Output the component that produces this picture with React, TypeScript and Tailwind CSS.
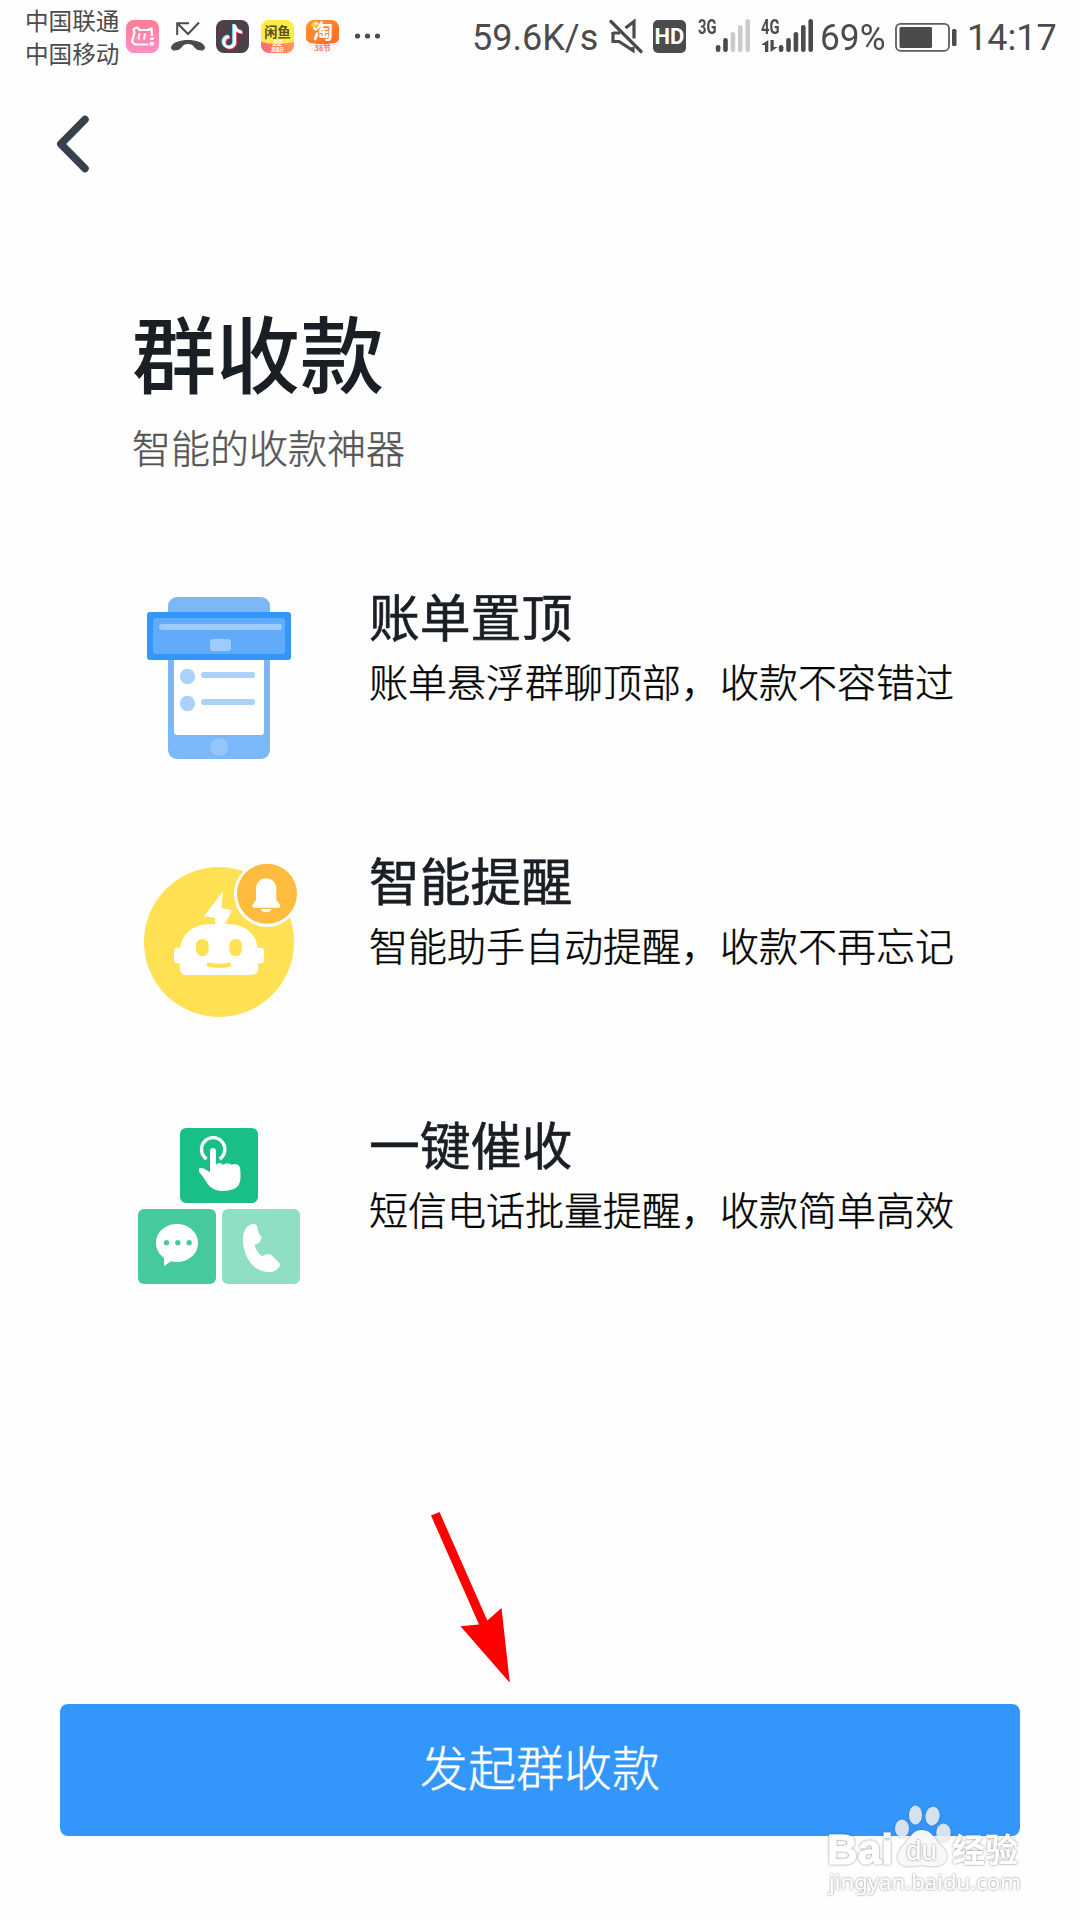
import React from "react";

const CJK = "font-['Noto_Sans_CJK_SC',sans-serif]";

function SignalBars({ active }: { active: number }) {
  const tops = [45, 38, 32, 25, 19];
  return (
    <svg className="h-[72px] w-[36px] shrink-0" viewBox="0 0 36 72">
      {tops.map((t, i) => (
        <rect key={t} x={0.8 + i * 7.4} y={t} width="4.6" height={52 - t} rx="2.2" fill={i < active ? "#4b4b4b" : "#cacaca"} />
      ))}
    </svg>
  );
}

function StatusBar() {
  return (
    <header className="relative flex h-[72px] w-full items-center text-[#4b4b4b]">
      <div className="ml-[25px] w-[101px] shrink-0 pt-[1px] font-['Noto_Sans_CJK_SC',sans-serif] text-[23.6px] leading-[33px] whitespace-nowrap">
        <div>中国联通</div>
        <div>中国移动</div>
      </div>
      <div className="flex w-[334px] shrink-0 items-center gap-3">
        <svg className="size-[33px]" viewBox="0 0 33 33">
          <defs>
            <linearGradient id="pink" x2="0" y2="1">
              <stop stopColor="#ff7c96" />
              <stop offset="1" stopColor="#ff8fc3" />
            </linearGradient>
          </defs>
          <rect width="33" height="33" rx="8" fill="url(#pink)" />
          <path d="M22.500 24.500H9L6 21.500 8.500 12.500 7.500 9 11.500 7.500 13.500 10H22L25.500 8.500 26 16" fill="none" stroke="#fff" strokeWidth="2.200" strokeLinejoin="round" />
          <path d="M13.500 13.500l-1 6M19 13.500l-1 6" fill="none" stroke="#fff" strokeWidth="2.200" />
          <path d="M24.500 17.500h3.500l-.5 2.500h-3.500zM24 22h4l-.5 3.500h-4z" fill="#fff" />
        </svg>
        <svg className="h-[33px] w-[34px] -mr-px" viewBox="0 0 34 33">
          <path d="M6.200 15V3.300H18M6.500 3.500L17 14 28 2.500" fill="none" stroke="#4b4b4b" strokeWidth="2" />
          <path d="M0 27c2-5 9-7 17-7s15 2 17 7c0 2-1 3.500-3 3.500-4 0-6-1-8-3.500-1-2-3-3-6-3s-5 1-6 3c-2 2.500-4 3.500-8 3.500-2 0-3-1.500-3-3.500z" fill="#4b4b4b" />
        </svg>
        <svg className="size-[33px]" viewBox="0 0 33 33">
          <rect width="33" height="33" rx="8" fill="#4d404b" />
          <g fill="none" strokeWidth="3">
            <path d="M18.500 4.500v17.500a5.300 5.300 0 1 1-5.300-5.300M18.500 5.500c.5 4 4 6.500 7.500 6.500" stroke="#5df0ee" transform="translate(-.9 -.6)" />
            <path d="M18.500 4.500v17.500a5.300 5.300 0 1 1-5.300-5.300M18.500 5.500c.5 4 4 6.500 7.500 6.500" stroke="#ff4a6c" transform="translate(1 .8)" />
            <path d="M18.500 4.500v17.500a5.300 5.300 0 1 1-5.300-5.300M18.500 5.500c.5 4 4 6.500 7.500 6.500" stroke="#fff" />
          </g>
        </svg>
        <svg className="size-[33px]" viewBox="0 0 33 33">
          <defs>
            <clipPath id="fishClip"><rect width="33" height="33" rx="8" /></clipPath>
            <linearGradient id="fishBase">
              <stop stopColor="#ff687c" />
              <stop offset="1" stopColor="#ff9a55" />
            </linearGradient>
          </defs>
          <g clipPath="url(#fishClip)">
            <rect width="33" height="33" fill="#ffeb47" />
            <path d="M0 22q16 4 33 0v11H0z" fill="url(#fishBase)" />
            <text x="16.500" y="16.500" textAnchor="middle" fontFamily="Noto Sans CJK SC" fontWeight="700" fontSize="13.200" fill="#57501c">闲鱼</text>
            <text x="16.500" y="26.300" textAnchor="middle" fontFamily="Liberation Sans" fontWeight="700" fontStyle="italic" fontSize="8.500" fill="#fff">22</text>
            <text x="16.500" y="30.500" textAnchor="middle" fontFamily="Noto Sans CJK SC" fontWeight="700" fontSize="4.200" fill="#fff">超级日</text>
          </g>
        </svg>
        <svg className="size-[33px] overflow-visible" viewBox="0 0 33 33">
          <defs>
            <linearGradient id="orange" x2="1" y2="1">
              <stop stopColor="#ff9b32" />
              <stop offset="1" stopColor="#ff6427" />
            </linearGradient>
          </defs>
          <path d="M0 8a8 8 0 0 1 8-8h17a8 8 0 0 1 8 8v17a8 8 0 0 1-8 6H8a8 8 0 0 1-8-6z" fill="#fff6f2" />
          <path d="M0 8a8 8 0 0 1 8-8h17a8 8 0 0 1 8 8v10q0 5-8 5.500Q16 25 8 23.500 0 23 0 18z" fill="url(#orange)" />
          <circle cx="8" cy="5" r="2.500" fill="#ffd52e" />
          <text x="16.800" y="19" textAnchor="middle" fontFamily="Noto Sans CJK SC" fontWeight="700" fontSize="20.500" fill="#fff">淘</text>
          <text x="16.500" y="31" textAnchor="middle" fontFamily="Noto Sans CJK SC" fontWeight="700" fontSize="7.500" fill="#f97650">38节</text>
        </svg>
        <svg className="ml-[3px] h-[33px] w-[28px]" viewBox="0 0 28 33" fill="#4b4b4b">
          <circle cx="3.500" cy="16" r="2.600" />
          <circle cx="13.500" cy="16" r="2.600" />
          <circle cx="23.500" cy="16" r="2.600" />
        </svg>
      </div>
      <div className="ml-[12px] w-[137px] shrink-0 pt-[4px] font-[Roboto,sans-serif] text-[36px] leading-[72px] whitespace-nowrap">59.6K/s</div>
      <svg className="h-[72px] w-[36px] shrink-0" viewBox="0 0 36 72" fill="none" stroke="#4b4b4b">
        <path d="M16.500 28l8.500-6.500v17M4 33h7M4 32v9.500h6l14 9V47" strokeWidth="3.200" />
        <path d="M2 21.500l30 30" strokeWidth="3.200" strokeLinecap="round" />
      </svg>
      <div className="ml-[8px] flex h-[33px] w-[33px] shrink-0 items-center justify-center rounded-[5px] bg-[#4b4b4b] pt-px font-[Roboto,sans-serif] text-[22px] leading-none font-bold text-white">
        <span>HD</span>
      </div>
      <div className="ml-[12px] w-[17px] shrink-0 self-start pt-[17px] font-['Roboto',sans-serif] text-[20px] leading-[20px] font-bold">
        <span className="inline-block origin-left scale-x-[0.74]">3G</span>
      </div>
      <SignalBars active={2} />
      <div className="ml-[10px] flex w-[17px] shrink-0 flex-col self-start pt-[17px] font-['Roboto',sans-serif] text-[20px] leading-[20px] font-bold">
        <span className="inline-block origin-left scale-x-[0.74]">4G</span>
        <svg className="mt-[3px] h-[13px] w-[17px]" viewBox="0 0 17 13" fill="#4b4b4b">
          <path d="M4 12V5H0L7.300 0v12zM9.500 0h3.200v7h4L9.500 12z" />
        </svg>
      </div>
      <SignalBars active={5} />
      <div className="ml-[6px] w-[75px] shrink-0 pt-[4px] font-[Roboto,sans-serif] text-[36px] leading-[72px] whitespace-nowrap">
        <span className="inline-block origin-left scale-x-[0.98]">69%</span>
      </div>
      <svg className="h-[72px] w-[64px] shrink-0" viewBox="0 0 64 72">
        <rect x="1" y="23.800" width="53" height="27" rx="4.500" fill="none" stroke="#5c5c5c" strokeWidth="1.800" />
        <rect x="4.500" y="27" width="32.500" height="21" rx="1.500" fill="#4b4b4b" />
        <rect x="57" y="29" width="4.500" height="17" rx="1.500" fill="#4b4b4b" />
      </svg>
      <div className="ml-[8px] shrink-0 pt-[4px] font-[Roboto,sans-serif] text-[36px] leading-[72px] whitespace-nowrap">14:17</div>
    </header>
  );
}

function BillIcon() {
  return (
    <svg className="size-[200px] shrink-0" viewBox="0 0 600 600">
      <rect x="144" y="51" width="306" height="486" rx="27" fill="#7ab8fa" />
      <path d="M162 230h270v226q0 9-9 9H171q-9 0-9-9z" fill="#fff" />
      <rect x="81" y="96" width="432" height="144" rx="9" fill="#3296fb" />
      <rect x="99" y="114" width="396" height="108" rx="9" fill="#60abfa" />
      <rect x="117" y="132" width="369" height="18" rx="9" fill="#9dcbfb" />
      <rect x="270" y="177" width="63" height="36" rx="8" fill="#9dcbfb" />
      <g fill="#aad2fb">
        <circle cx="202.500" cy="289.500" r="23" />
        <circle cx="202.500" cy="370.500" r="23" />
        <rect x="243" y="276" width="162" height="18" rx="7" />
        <rect x="243" y="357" width="162" height="18" rx="7" />
      </g>
      <circle cx="297" cy="501" r="27" fill="#94c6fb" />
    </svg>
  );
}

function RobotIcon() {
  return (
    <svg className="size-[200px] shrink-0" viewBox="0 0 600 600">
      <circle cx="297" cy="306" r="225" fill="#ffe153" />
      <path d="M309 154L304 205 336 210 315 253H328C374 253 408 282 413 323H423Q432 323 432 332V361Q432 370 423 370H415V383Q415 405 393 405H201Q179 405 179 383V370H171Q162 370 162 361V332Q162 323 171 323H181C186 282 220 253 266 253H285V234L252 229Z" fill="#fff" />
      <rect x="228" y="297" width="38" height="51" rx="19" fill="#ffe153" />
      <rect x="328" y="297" width="38" height="51" rx="19" fill="#ffe153" />
      <path d="M267 374q30 7 60 0" fill="none" stroke="#ffe153" strokeWidth="13" strokeLinecap="round" />
      <circle cx="441" cy="162" r="99" fill="#fff" />
      <circle cx="441" cy="161" r="90" fill="#ffbb3e" />
      <path d="M408 148C408 104 469 104 469 148V180L480 194Q484 203 475 203H403Q394 203 398 194L408 180Z" fill="#fff" />
      <path d="M422 207h33q-4 10-16 10t-17-10z" fill="#fff" />
    </svg>
  );
}

function TilesIcon() {
  return (
    <svg className="size-[200px] shrink-0" viewBox="0 0 600 600">
      <rect x="180" y="54" width="234" height="225" rx="18" fill="#1abf86" />
      <rect x="54" y="297" width="234" height="225" rx="18" fill="#46ca9d" />
      <rect x="306" y="297" width="234" height="225" rx="18" fill="#8fdfc5" />
      <path d="M260 147A35 35 0 1 1 299 147" fill="none" stroke="#fff" strokeWidth="10" />
      <path d="M270 187V123Q270 114 279 114T288 123V164Q299 154 309 164Q322 155 335 164Q360 156 361 181C364 224 358 242 307 243Q283 243 269 229C261 221 252 203 238 187Q235 179 238 175C248 170 262 182 270 187Z" fill="#fff" />
      <path d="M171 342C206 342 234 367 234 399S206 456 171 456Q160 456 152 454L135 467Q132 468 132 464V443C117 433 108 417 108 399C108 367 136 342 171 342Z" fill="#fff" />
      <g fill="#46ca9d">
        <circle cx="139.500" cy="398" r="8" />
        <circle cx="173.500" cy="398" r="8" />
        <circle cx="207.500" cy="398" r="8" />
      </g>
      <path d="M396 342Q406 340 411 347L416 368L424 381Q426 394 416 399L404 404Q408 425 426 439L437 434Q447 430 454 435L476 457Q484 465 476 473C461 490 441 489 420 481C389 469 368 427 369 385C370 363 379 347 396 342Z" fill="#fff" />
    </svg>
  );
}

const features = [
  { icon: <BillIcon />, title: "账单置顶", text: "账单悬浮群聊顶部，收款不容错过" },
  { icon: <RobotIcon />, title: "智能提醒", text: "智能助手自动提醒，收款不再忘记" },
  { icon: <TilesIcon />, title: "一键催收", text: "短信电话批量提醒，收款简单高效" },
];
const iconOffsets = ["mt-0", "-mt-1", "mt-[2px]"];

function Watermark() {
  return (
    <svg className="absolute top-[1796px] left-[820px] h-[110px] w-[220px]" viewBox="0 0 220 110">
      <defs>
        <filter id="soft" x="-10%" y="-10%" width="120%" height="120%">
          <feDropShadow dx="0" dy="0" stdDeviation="0.9" floodColor="#555" floodOpacity="0.8" />
        </filter>
      </defs>
      <g fill="#fff" filter="url(#soft)">
        <g opacity="0.72">
          <ellipse cx="82" cy="32.500" rx="7" ry="9" />
          <ellipse cx="95.500" cy="19" rx="6.500" ry="9.500" />
          <ellipse cx="112.500" cy="20" rx="7" ry="9.500" transform="rotate(10 112 20)" />
          <ellipse cx="123.500" cy="36.500" rx="7.200" ry="9" />
        </g>
        <path d="M102 34C112 34 114 43 121 50C130 58 128 69 116 70C109 71 106 69 102 69S92 71 87 70C76 69 75 58 83 50C91 43 91 34 102 34Z" opacity="0.9" />
      </g>
      <g filter="url(#soft)" fill="#fff" fontFamily="Liberation Sans" fontWeight="700">
        <text x="7" y="68" fontSize="42" textLength="66" lengthAdjust="spacingAndGlyphs" stroke="#fff" strokeWidth="1">Bai</text>
        <text x="86" y="64" fontSize="27" fontWeight="400" textLength="31" lengthAdjust="spacingAndGlyphs">du</text>
        <text x="132" y="66" fontSize="33" fontFamily="Noto Sans CJK SC" textLength="66">经验</text>
      </g>
      <text x="9" y="94" fontSize="22" fontFamily="Noto Sans" fill="#fff" filter="url(#soft)" textLength="192" lengthAdjust="spacingAndGlyphs">jingyan.baidu.com</text>
    </svg>
  );
}

export default function App() {
  return (
    <div className={`relative flex h-[1920px] w-[1080px] flex-col overflow-hidden bg-[#fefefe] ${CJK}`}>
      <StatusBar />
      <nav className="flex h-[144px] items-center pl-[51px]">
        <svg className="h-[64px] w-[44px]" viewBox="0 0 44 64">
          <path d="M34 7.500L9.800 32l24.200 24.500" fill="none" stroke="#36414d" strokeWidth="7.500" strokeLinecap="round" strokeLinejoin="round" />
        </svg>
      </nav>
      <main className="flex flex-1 flex-col">
        <h1 className="mt-[77px] ml-[132px] text-[84px] leading-[116px] font-medium text-[#1a1f26]">群收款</h1>
        <p className="mt-[7px] ml-[132px] text-[39px] leading-[60px] font-light text-[#555] [-webkit-text-stroke:0.4px_#555]">智能的收款神器</p>
        <section className="mt-[104px] flex flex-col">
          {features.map((f, i) => (
            <article key={f.title} className="flex h-[264px] items-start pl-[120px]">
              <div className={iconOffsets[i]}>{f.icon}</div>
              <div className="ml-[49px]">
                <h2 className="-mt-[2px] text-[50.8px] leading-[74px] font-normal text-[#1a1f26] [-webkit-text-stroke:0.6px_#1a1f26]">{f.title}</h2>
                <p className="-mt-[2px] text-[39px] leading-[60px] font-light whitespace-nowrap text-black [-webkit-text-stroke:0.4px_#000]">{f.text}</p>
              </div>
            </article>
          ))}
        </section>
      </main>
      <button className="mx-[60px] mb-[84px] h-[132px] shrink-0 rounded-[8px] bg-[#3296fb] pb-[9px] text-[48px] leading-[123px] font-light text-white [-webkit-text-stroke:0.4px_#fff]">发起群收款</button>
      <svg className="absolute top-[1500px] left-[420px] h-[190px] w-[100px]" viewBox="420 1500 100 190">
        <path d="M431 1515.500L439.500 1512 487.300 1620.500 501.500 1608 509.800 1682.800 460.500 1626.300 479 1624.500z" fill="#f00" />
      </svg>
      <Watermark />
    </div>
  );
}
